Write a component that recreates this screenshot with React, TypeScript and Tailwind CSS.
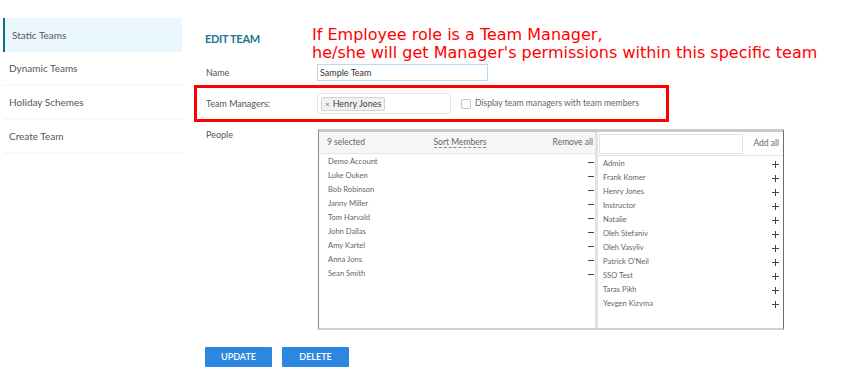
import React from "react";

const sideItems = ["Static Teams", "Dynamic Teams", "Holiday Schemes", "Create Team"];

const selected = [
	"Demo Account",
	"Luke Ouken",
	"Bob Robinson",
	"Janny Miller",
	"Tom Harvald",
	"John Dallas",
	"Amy Kartel",
	"Anna Jons",
	"Sean Smith",
];

const available = [
	"Admin",
	"Frank Komer",
	"Henry Jones",
	"Instructor",
	"Natalie",
	"Oleh Stefaniv",
	"Oleh Vasyliv",
	"Patrick O'Neil",
	"SSO Test",
	"Taras Pikh",
	"Yevgen Kizyma",
];

const Plus = () => (
	<span className="relative w-[7px] h-[7px]">
		<span className="absolute left-0 top-[3px] w-[7px] h-[1px] bg-[#444]" />
		<span className="absolute left-[3px] top-0 w-[1px] h-[7px] bg-[#444]" />
	</span>
);

const Sidebar = () => (
	<div className="w-[179px] ml-[3px] pt-[18px] shrink-0">
		{sideItems.map((item, idx) => (
			<div
				key={item}
				className={
					idx === 0
						? "h-[34px] flex items-center pl-[7px] bg-[#eaf8fe] border-l-2 border-[#0d6d8c] text-[#555] text-[10px]"
						: "h-[34px] flex items-center pl-[6px] border-b-2 border-[#f8f8f8] text-[#555] text-[10px]"
				}
			>
				{item}
			</div>
		))}
	</div>
);

const DualList = () => (
	<div className="w-[466px] h-[201px] flex border-t-[3px] border-t-[#c9c9c9] border-l border-l-[#8a8a8a] border-r border-r-[#6d6d6d] border-b-2 border-b-[#cfcfcf]">
		<div className="w-[279px] flex flex-col border-r-[3px] border-r-[#e2e2e2]">
			<div className="h-[22px] bg-[#f6f6f6] border-b border-[#e6e6e6] flex items-center justify-between pl-[8px] pr-[2px] text-[8.5px] text-[#666]">
				<span className="w-[90px]">9 selected</span>
				<span className="border-b border-dashed border-[#888] leading-[10px]">Sort Members</span>
				<span className="w-[90px] text-right">Remove all</span>
			</div>
			<div className="pt-[1px]">
				{selected.map((name) => (
					<div key={name} className="h-[14px] flex items-center justify-between pl-[9px] pr-[1px] text-[7.6px] text-[#666]">
						<span>{name}</span>
						<span className="w-[6px] h-[1px] bg-[#444]" />
					</div>
				))}
			</div>
		</div>
		<div className="flex-1 flex flex-col">
			<div className="h-[24px] flex items-center pl-[1px] pr-[4px] border-b border-[#e6e6e6]">
				<div className="w-[144px] h-[20px] border border-[#e2e2e2] bg-white" />
				<span className="ml-auto text-[8.5px] text-[#666]">Add all</span>
			</div>
			<div className="pt-[1px]">
				{available.map((name) => (
					<div key={name} className="h-[14px] flex items-center justify-between pl-[5px] pr-[4px] text-[7.6px] text-[#666]">
						<span>{name}</span>
						<Plus />
					</div>
				))}
			</div>
		</div>
	</div>
);

export default function App() {
	return (
		<div className="relative w-[862px] h-[389px] bg-white flex font-['Lato','Noto_Sans',sans-serif]">
			<Sidebar />
			<div className="pl-[23px] pt-[33px] flex flex-col">
				<div className="text-[11px] font-bold text-[#1a7694] tracking-[-0.3px] h-[12px] leading-[12px]">EDIT TEAM</div>

				<div className="mt-[19px] flex items-center h-[17px]">
					<span className="w-[112px] pl-[1px] text-[9px] text-[#555]">Name</span>
					<div className="w-[171px] h-[17px] border border-[#bcd9f0] flex items-center pl-[2px] text-[9px] text-[#333]">
						Sample Team
					</div>
				</div>

				<div className="mt-[4px] -ml-[11px] w-[475px] h-[37px] border-[3px] border-[#ff0000] flex items-center">
					<span className="w-[120px] pl-[9px] text-[9px] text-[#555]">Team Managers:</span>
					<div className="w-[134px] h-[21px] border border-[#e3e3e3] rounded-[2px] flex items-center pl-[3px]">
						<span className="h-[14px] flex items-center px-[3px] bg-[#f1f1f1] border border-[#d3d3d3] rounded-[2px] text-[9px] text-[#444]">
							<span className="text-[#4a7fb8] mr-[3px] text-[8px]">×</span>Henry Jones
						</span>
					</div>
					<span className="ml-[10px] w-[10px] h-[10px] border border-[#c4c4c4] rounded-[2px] bg-white" />
					<span className="ml-[4px] text-[8.6px] text-[#666]">Display team managers with team members</span>
				</div>

				<div className="mt-[7px] flex">
					<span className="w-[113px] pl-[1px] text-[9px] text-[#555] leading-[11px]">People</span>
					<DualList />
				</div>

				<div className="mt-[17px] flex gap-[10px]">
					<button className="w-[67px] h-[20px] bg-[#2b87e0] text-white text-[9px] font-semibold rounded-[1px]">UPDATE</button>
					<button className="w-[67px] h-[20px] bg-[#2b87e0] text-white text-[9px] font-semibold rounded-[1px]">DELETE</button>
				</div>
			</div>

			<div className="absolute left-[312px] top-[26px] text-[16px] leading-[18px] text-[#ff0000] font-['DejaVu_Sans',sans-serif]">
				<div>If Employee role is a Team Manager,</div>
				<div>he/she will get Manager's permissions within this specific team</div>
			</div>
		</div>
	);
}
